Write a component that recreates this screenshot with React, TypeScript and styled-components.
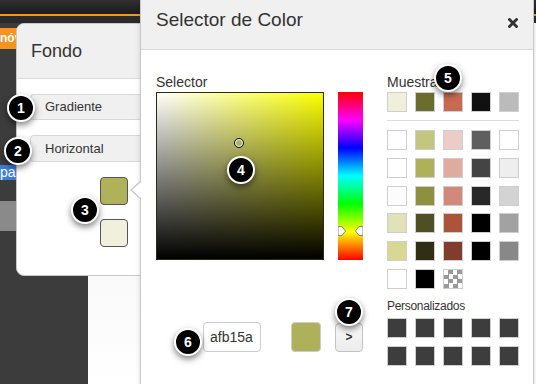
import { createGlobalStyle, styled } from "styled-components";

const GlobalStyle = createGlobalStyle`
  html, body { margin: 0; padding: 0; }
  body { font-family: "Liberation Sans", Arial, sans-serif; color: #333; }
  * { box-sizing: border-box; }
`;

const presets = ["#efefdc", "#6c6c2e", "#c66a52", "#111111", "#bbbbbb"];

const palette = [
  "#ffffff", "#c3c67e", "#ebcdc7", "#5f5f5f", "#ffffff",
  "#ffffff", "#afb15a", "#dfaba1", "#444444", "#eeeeee",
  "#fcfcfc", "#8d903e", "#d18a7a", "#282828", "#d3d3d3",
  "#e2e2b8", "#4e4f24", "#ab533b", "#000000", "#a2a2a2",
  "#d8d794", "#2f2f14", "#803d2d", "#000000", "#888888",
  "#ffffff", "#000000", "checker",
];

const custom = Array.from({ length: 10 }, () => "#3d3d3d");

const badges = [
  { n: 1, x: 21, y: 108 },
  { n: 2, x: 18, y: 151 },
  { n: 3, x: 85, y: 210 },
  { n: 4, x: 241, y: 170 },
  { n: 5, x: 448, y: 78 },
  { n: 6, x: 188, y: 342 },
  { n: 7, x: 349, y: 312 },
];

function App() {
  return (
    <>
      <GlobalStyle />
      <Page>
        <TopBar />
        <OrangeLine />
        <SubBar />
        <Workspace>
          <Sidebar>
            <SideTab $bg="#f7931e" $h={21} $mt={5} $bold>nóv</SideTab>
            <SideTab $bg="#3b7ddd" $h={15} $mt={116}>pa</SideTab>
            <SideTab $bg="#8a8a8a" $h={30} $mt={21} />
          </Sidebar>
          <Canvas />
          <Rest />
        </Workspace>

        <FondoPanel>
          <FondoHeader>Fondo</FondoHeader>
          <FondoBody>
            <SelectRow $h={26}>Gradiente</SelectRow>
            <SelectRow $h={27}>Horizontal</SelectRow>
            <StopColumn>
              <Stop $color="#b0b25a" />
              <Stop $color="#f0f0dc" />
            </StopColumn>
          </FondoBody>
        </FondoPanel>

        <Dialog>
          <Pointer />
          <DialogHeader>
            <DialogTitle>Selector de Color</DialogTitle>
            <svg width="10" height="10" viewBox="0 0 10 10">
              <path d="M1.5 1.5 L8.5 8.5 M8.5 1.5 L1.5 8.5" stroke="#333" strokeWidth="2.8" strokeLinecap="square" />
            </svg>
          </DialogHeader>
          <DialogBody>
            <PickerColumn>
              <Label>Selector</Label>
              <PickerRow>
                <SatSquare>
                  <Marker />
                </SatSquare>
                <HueBar>
                  <HueHandle>
                    <svg width="25" height="10" viewBox="0 0 25 10">
                      <path d="M0 0.5 H4 L7.5 5 L4 9.5 H0 Z" fill="#fff" stroke="#888" strokeWidth="1" />
                      <path d="M25 0.5 H21 L17.5 5 L21 9.5 H25 Z" fill="#fff" stroke="#888" strokeWidth="1" />
                    </svg>
                  </HueHandle>
                </HueBar>
              </PickerRow>
              <ValueRow>
                <HexInput>afb15a</HexInput>
                <Preview $color="#afb15a" />
                <NextButton>&gt;</NextButton>
              </ValueRow>
            </PickerColumn>
            <SwatchColumn>
              <Label>Muestras</Label>
              <SwatchGrid>
                {presets.map((c, i) => (
                  <Swatch key={i} $color={c} />
                ))}
              </SwatchGrid>
              <Divider />
              <SwatchGrid>
                {palette.map((c, i) => (c === "checker" ? <Checker key={i} /> : <Swatch key={i} $color={c} />))}
              </SwatchGrid>
              <SmallLabel>Personalizados</SmallLabel>
              <SwatchGrid>
                {custom.map((c, i) => (
                  <Swatch key={i} $color={c} />
                ))}
              </SwatchGrid>
            </SwatchColumn>
          </DialogBody>
        </Dialog>

        {badges.map((b) => (
          <Badge key={b.n} style={{ left: b.x - 14, top: b.y - 14 }}>
            {b.n}
          </Badge>
        ))}
      </Page>
    </>
  );
}

export default App;

const Page = styled.div`
  position: relative;
  width: 536px;
  height: 384px;
  overflow: hidden;
  background: #fff;
  display: flex;
  flex-direction: column;
`;

const TopBar = styled.div`
  flex: none;
  height: 14px;
  background: linear-gradient(#303030, #1c1c1c);
`;

const OrangeLine = styled.div`
  flex: none;
  height: 2px;
  background: #f7941d;
`;

const SubBar = styled.div`
  flex: none;
  height: 7px;
  background: #2a2a2a;
`;

const Workspace = styled.div`
  flex: 1;
  display: flex;
`;

const Sidebar = styled.div`
  width: 88px;
  background: #3c3c3c;
  display: flex;
  flex-direction: column;
`;

const SideTab = styled.div<{ $bg: string; $h: number; $mt: number; $bold?: boolean }>`
  width: 30px;
  height: ${(p) => p.$h}px;
  margin-top: ${(p) => p.$mt}px;
  background: ${(p) => p.$bg};
  color: #fff;
  font-size: ${(p) => (p.$bold ? 12 : 14)}px;
  font-weight: ${(p) => (p.$bold ? "bold" : "normal")};
  line-height: ${(p) => p.$h}px;
  white-space: nowrap;
`;

const Canvas = styled.div`
  width: 52px;
  background: linear-gradient(#ececec, #ffffff);
`;

const Rest = styled.div`
  flex: 1;
  background: #fff;
`;

const FondoPanel = styled.div`
  position: absolute;
  left: 16px;
  top: 23px;
  width: 140px;
  height: 253px;
  background: #fff;
  border: 1px solid #c8c8c8;
  border-radius: 8px 0 0 8px;
  overflow: hidden;
`;

const FondoHeader = styled.div`
  height: 55px;
  line-height: 54px;
  padding-left: 14px;
  font-size: 18px;
  color: #333;
  background: #f0f0f0;
  border-bottom: 1px solid #dcdcdc;
`;

const FondoBody = styled.div`
  display: flex;
  flex-direction: column;
  padding: 15px 0 0 13px;
  gap: 15px;
`;

const SelectRow = styled.div<{ $h: number }>`
  height: ${(p) => p.$h}px;
  line-height: ${(p) => p.$h - 2}px;
  padding-left: 14px;
  font-size: 13px;
  color: #333;
  background: #f0f0f0;
  border: 1px solid #d8d8d8;
  border-right: none;
  border-radius: 4px 0 0 4px;
`;

const StopColumn = styled.div`
  display: flex;
  flex-direction: column;
  gap: 14px;
  margin-left: 70px;
`;

const Stop = styled.div<{ $color: string }>`
  width: 28px;
  height: 28px;
  border-radius: 4px;
  border: 1px solid #555;
  background: ${(p) => p.$color};
`;

const Dialog = styled.div`
  position: absolute;
  left: 140px;
  top: 0;
  width: 394px;
  height: 400px;
  background: #fff;
  border-left: 1px solid #c8c8c8;
  border-right: 1px solid #c8c8c8;
  box-shadow: 0 0 5px rgba(0, 0, 0, 0.15);
`;

const Pointer = styled.div`
  position: absolute;
  left: -11px;
  top: 180px;
  width: 0;
  height: 0;
  border-top: 10px solid transparent;
  border-bottom: 10px solid transparent;
  border-right: 11px solid #c8c8c8;

  &::after {
    content: "";
    position: absolute;
    left: 2px;
    top: -9px;
    border-top: 9px solid transparent;
    border-bottom: 9px solid transparent;
    border-right: 10px solid #fff;
  }
`;

const DialogHeader = styled.div`
  height: 50px;
  display: flex;
  align-items: flex-start;
  justify-content: space-between;
  padding: 9px 15px 0 15px;
  background: #f0f0f0;
  border-bottom: 1px solid #d8d8d8;

  svg {
    margin-top: 9px;
  }
`;

const DialogTitle = styled.div`
  font-size: 19px;
  line-height: 22px;
  color: #333;
`;

const DialogBody = styled.div`
  display: flex;
  gap: 24px;
  padding: 24px 15px 0 15px;
`;

const PickerColumn = styled.div`
  width: 208px;
  display: flex;
  flex-direction: column;
`;

const Label = styled.div`
  font-size: 14px;
  line-height: 16px;
  color: #333;
  margin-bottom: 2px;
`;

const PickerRow = styled.div`
  display: flex;
  gap: 14px;
`;

const SatSquare = styled.div`
  position: relative;
  width: 168px;
  height: 168px;
  border: 1px solid #2b2b10;
  background: linear-gradient(to top, #000, rgba(0, 0, 0, 0)),
    linear-gradient(to right, #fff, hsl(61, 100%, 50%));
`;

const Marker = styled.div`
  position: absolute;
  left: 77px;
  top: 45px;
  width: 10px;
  height: 10px;
  border-radius: 50%;
  border: 1px solid #000;
  box-shadow: inset 0 0 0 1px #fff;
`;

const HueBar = styled.div`
  position: relative;
  width: 25px;
  height: 168px;
  background: linear-gradient(
    to bottom,
    #ff0000 0%,
    #ff00ff 16.7%,
    #0000ff 33.3%,
    #00ffff 50%,
    #00ff00 66.7%,
    #ffff00 83.3%,
    #ff0000 100%
  );
`;

const HueHandle = styled.div`
  position: absolute;
  left: 0;
  top: 134px;
  height: 10px;
  display: flex;
`;

const ValueRow = styled.div`
  display: flex;
  justify-content: flex-end;
  align-items: flex-start;
  margin-top: 62px;
`;

const HexInput = styled.div`
  width: 58px;
  height: 30px;
  border: 1px solid #ccc;
  border-radius: 4px;
  padding-left: 6px;
  font-size: 14px;
  line-height: 28px;
  color: #333;
  margin-right: 30px;
`;

const Preview = styled.div<{ $color: string }>`
  width: 30px;
  height: 30px;
  border-radius: 4px;
  border: 1px solid #ccc;
  background: ${(p) => p.$color};
  margin-right: 14px;
`;

const NextButton = styled.div`
  width: 28px;
  height: 29px;
  margin-top: 1px;
  border: 1px solid #c4c4c4;
  border-radius: 4px;
  background: linear-gradient(#f8f8f8, #ececec);
  font-size: 12px;
  font-weight: bold;
  text-align: center;
  line-height: 27px;
  color: #333;
`;

const SwatchColumn = styled.div`
  width: 140px;
  display: flex;
  flex-direction: column;
`;

const SwatchGrid = styled.div`
  display: grid;
  grid-template-columns: repeat(5, 20px);
  grid-auto-rows: 20px;
  column-gap: 8px;
  row-gap: 7.8px;
`;

const Swatch = styled.div<{ $color: string }>`
  border: 1px solid #cfcfcf;
  background: ${(p) => p.$color};
`;

const Checker = styled.div`
  border: 1px solid #cfcfcf;
  background: repeating-conic-gradient(#999 0% 25%, #fff 0% 50%) 0 0 / 9px 9px;
`;

const Divider = styled.div`
  height: 1px;
  background: #dcdcdc;
  margin: 8px 0 9px;
`;

const SmallLabel = styled.div`
  font-size: 12px;
  line-height: 14px;
  color: #333;
  margin: 10px 0 5px;
  letter-spacing: -0.3px;
`;

const Badge = styled.div`
  position: absolute;
  width: 28px;
  height: 28px;
  border-radius: 50%;
  background: #000;
  border: 2px solid #fff;
  box-shadow: 0 3px 6px rgba(0, 0, 0, 0.5);
  color: #fff;
  font-size: 14px;
  font-weight: bold;
  text-align: center;
  line-height: 24px;
  z-index: 10;
`;
